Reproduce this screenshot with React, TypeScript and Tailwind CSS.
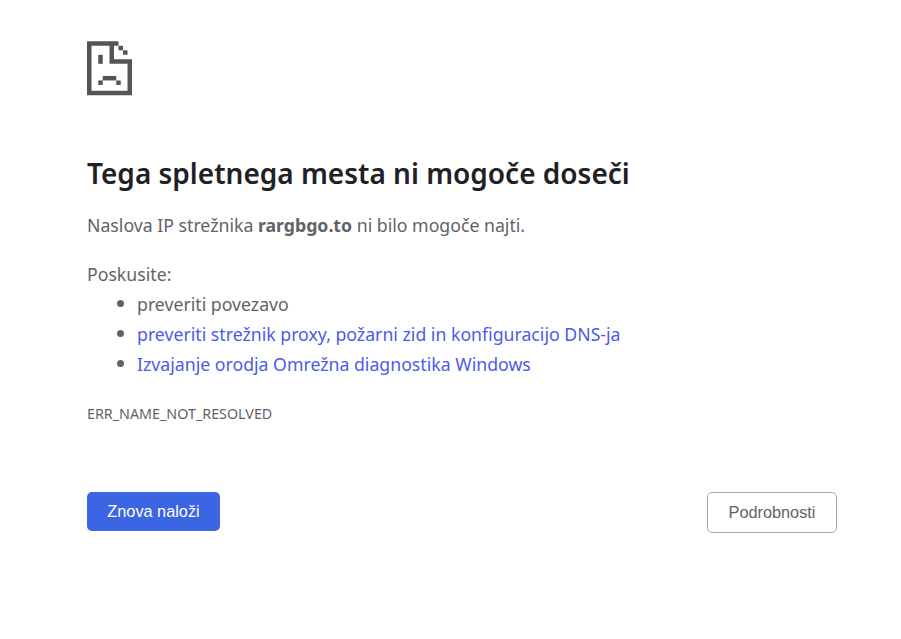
function Bullet({ children }: { children: React.ReactNode }) {
  return (
    <li className="flex items-center gap-[13px]">
      <span className="w-[7px] h-[7px] rounded-full bg-[#5f6368]" />
      {children}
    </li>
  );
}

export default function App() {
  return (
    <div className="min-h-[639px] bg-white pl-[87px] pt-[41px] text-[#5f6368] font-['Noto_Sans',sans-serif]">
      <div className="w-[750px]">
        {/* sad page icon */}
        <svg viewBox="0 0 10 12" className="block w-[45px] h-[54.6px] fill-[#555555]">
          <path d="M0 0H7V1H6V4H10V12H0ZM1 1V11H9V5H5V1Z" fillRule="evenodd" />
          <rect x="7" y="1" width="1" height="1" />
          <rect x="8" y="2" width="1" height="1" />
          <rect x="2.5" y="3" width="1" height="2" />
          <rect x="3.5" y="7.7" width="3" height="1" />
          <rect x="2.5" y="8.7" width="1" height="1" />
          <rect x="6.5" y="8.7" width="1" height="1" />
        </svg>

        <h1 className="mt-[57px] text-[28px] leading-[40px] font-semibold text-[#202124]">Tega spletnega mesta ni mogoče doseči</h1>
        <p className="mt-[17px] text-[17.7px] leading-[30px]">
          Naslova IP strežnika <strong className="font-bold">rargbgo.to</strong> ni bilo mogoče najti.
        </p>
        <p className="mt-[19px] text-[17.7px] leading-[30px]">Poskusite:</p>
        <ul className="pl-[30px] text-[17.7px] leading-[30px]">
          <Bullet>preveriti povezavo</Bullet>
          <Bullet><a className="text-[#4a5ce8]">preveriti strežnik proxy, požarni zid in konfiguracijo DNS-ja</a></Bullet>
          <Bullet><a className="text-[#4a5ce8]">Izvajanje orodja Omrežna diagnostika Windows</a></Bullet>
        </ul>
        <p className="mt-[20px] text-[14.3px] leading-[30px]">ERR_NAME_NOT_RESOLVED</p>

        <div className="mt-[63px] flex items-start justify-between font-['Liberation_Sans',sans-serif] text-[16.3px]">
          <button type="button" className="w-[133px] h-[39px] rounded-[5px] bg-[#3b65e3] text-white">Znova naloži</button>
          <button type="button" className="w-[130px] h-[41px] rounded-[5px] border border-[#a9a9a9] bg-white text-[#5f6368]">Podrobnosti</button>
        </div>
      </div>
    </div>
  );
}
